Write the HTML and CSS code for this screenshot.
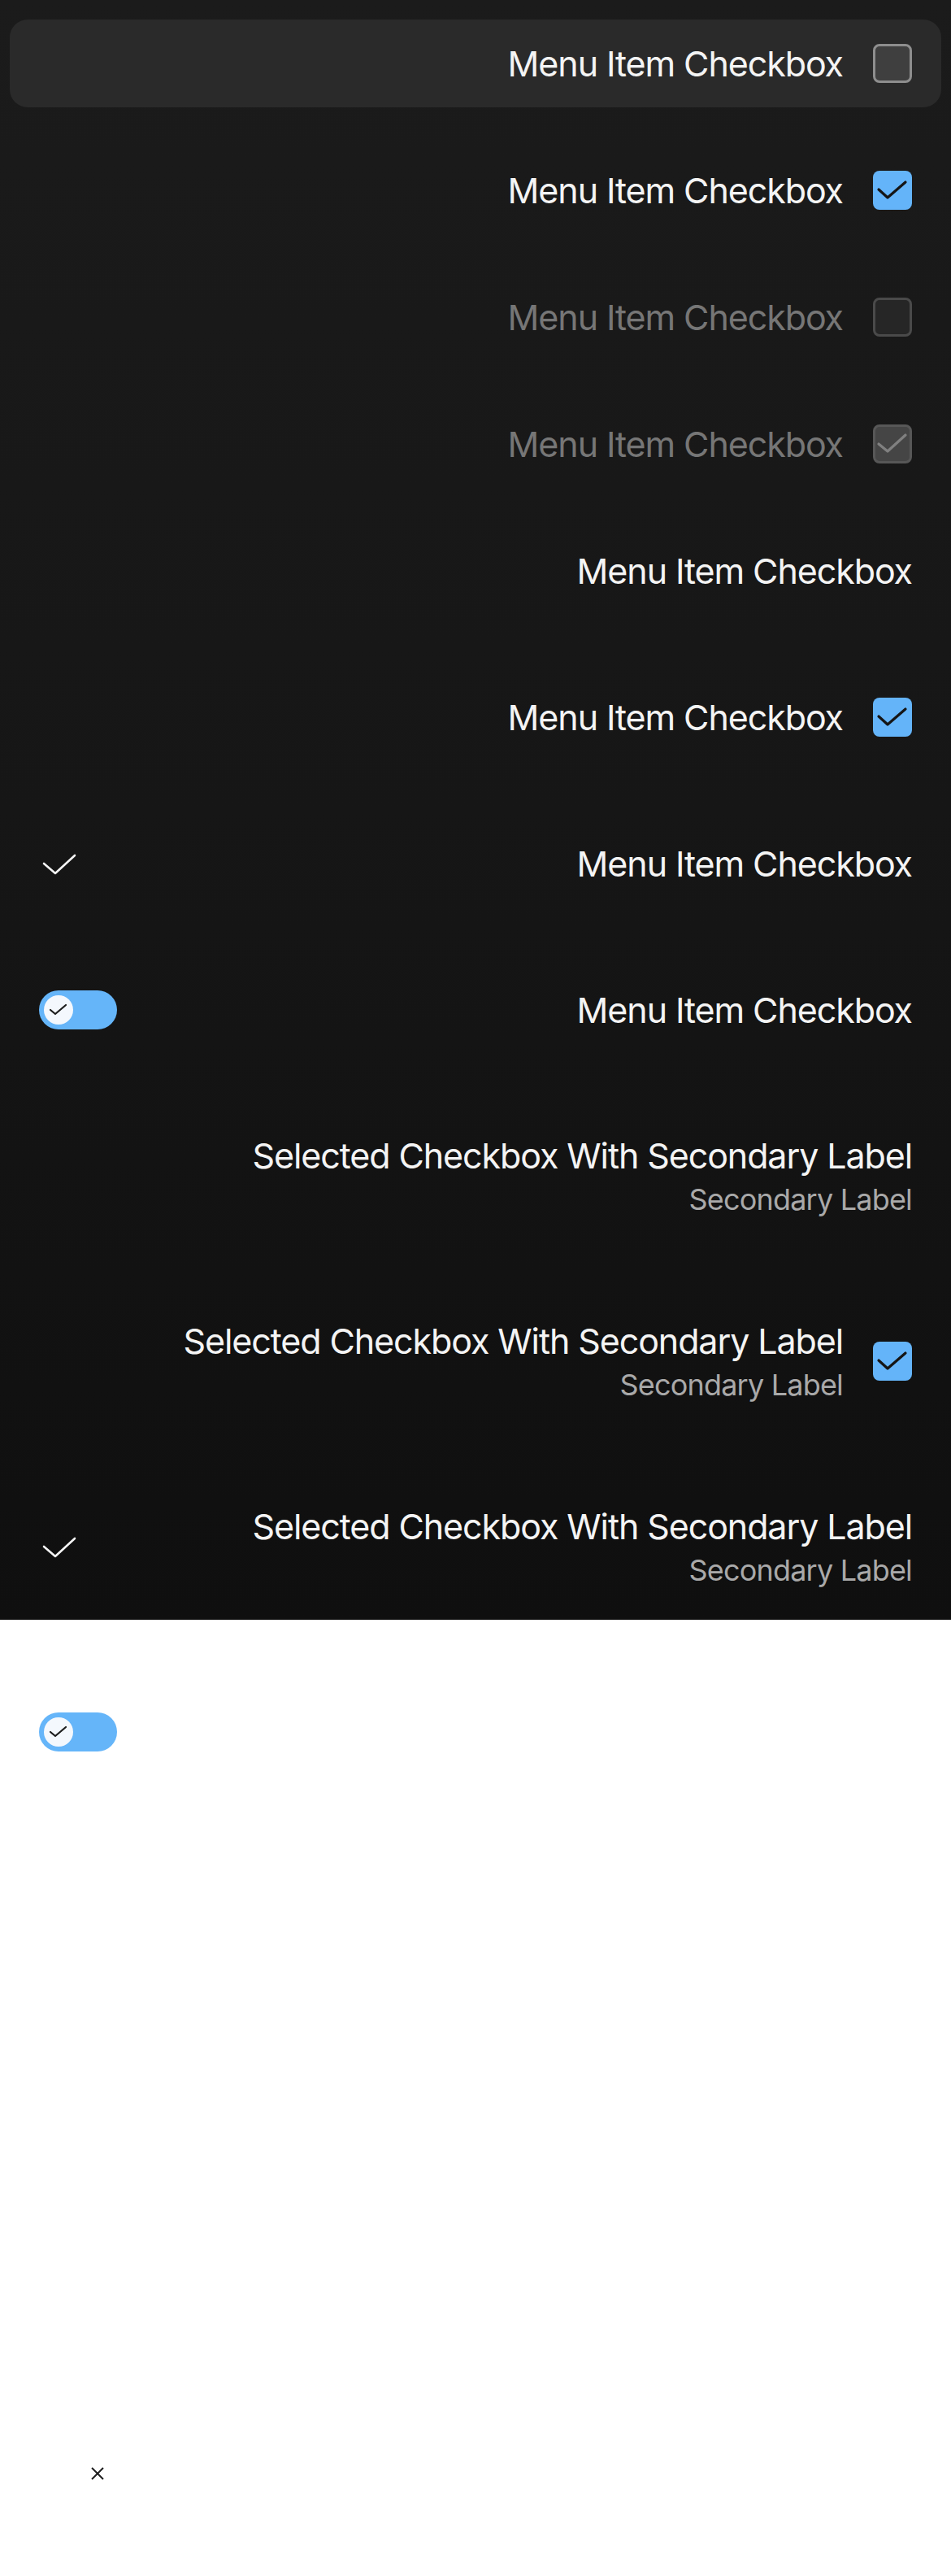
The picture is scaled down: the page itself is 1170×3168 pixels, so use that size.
FILE: index.html
```html
<!DOCTYPE html>
<html lang="en">
<head>
<meta charset="utf-8">
<title>Menu Item Checkbox</title>
<link rel="stylesheet" href="styles.css">
</head>
<body>
<main class="menu">
  <div class="row row--hover">
    <span class="label">Menu Item Checkbox</span>
    <span class="box box--off"></span>
  </div>
  <div class="row">
    <span class="label">Menu Item Checkbox</span>
    <span class="box box--on"><svg viewBox="0 0 48 48"><polyline points="7,23 18,33 40,14"/></svg></span>
  </div>
  <div class="row row--disabled">
    <span class="label">Menu Item Checkbox</span>
    <span class="box box--dis-off"></span>
  </div>
  <div class="row row--disabled">
    <span class="label">Menu Item Checkbox</span>
    <span class="box box--dis-on"><svg viewBox="0 0 48 48"><polyline points="7,24 18,33 40,13"/></svg></span>
  </div>
  <div class="row">
    <span class="label">Menu Item Checkbox</span>
  </div>
  <div class="row row--spaced">
    <span class="label">Menu Item Checkbox</span>
    <span class="box box--on"><svg viewBox="0 0 48 48"><polyline points="7,23 18,33 40,14"/></svg></span>
  </div>
  <div class="row row--spaced row--split">
    <svg class="tick" viewBox="0 0 44 28"><polyline points="4,14 18,26 42,4"/></svg>
    <span class="label">Menu Item Checkbox</span>
  </div>
  <div class="row row--spaced row--split">
    <span class="toggle"><span class="knob"><svg viewBox="0 0 36 36"><polyline points="8,18 14,23 27,12"/></svg></span></span>
    <span class="label">Menu Item Checkbox</span>
  </div>
  <div class="row row--two row--first-two">
    <div class="text">
      <span class="label">Selected Checkbox With Secondary Label</span>
      <span class="sub">Secondary Label</span>
    </div>
  </div>
  <div class="row row--two">
    <div class="text">
      <span class="label">Selected Checkbox With Secondary Label</span>
      <span class="sub">Secondary Label</span>
    </div>
    <span class="box box--on"><svg viewBox="0 0 48 48"><polyline points="7,23 18,33 40,14"/></svg></span>
  </div>
  <div class="row row--two row--split">
    <svg class="tick" viewBox="0 0 44 28"><polyline points="4,14 18,26 42,4"/></svg>
    <div class="text">
      <span class="label">Selected Checkbox With Secondary Label</span>
      <span class="sub">Secondary Label</span>
    </div>
  </div>
</main>
<section class="canvas">
  <span class="toggle"><span class="knob"><svg viewBox="0 0 36 36"><polyline points="8,18 14,23 27,12"/></svg></span></span>
  <svg class="close" viewBox="0 0 16 16"><path d="M1 1 L15 15 M15 1 L1 15"/></svg>
</section>
</body>
</html>
```

FILE: styles.css
```css
* { box-sizing: border-box; }

html, body {
  margin: 0;
  padding: 0;
  background: #ffffff;
}

body {
  font-family: Inter, "Noto Sans", "Liberation Sans", sans-serif;
  height: 3168px;
}

.menu {
  background: linear-gradient(180deg, #1b1b1b 0%, #161616 50%, #0f0f0f 100%);
  padding: 24px 12px 24px;
  display: flex;
  flex-direction: column;
}

.row {
  height: 108px;
  padding: 0 36px;
  display: flex;
  align-items: center;
  justify-content: flex-end;
  gap: 37px;
  border-radius: 22px;
  margin-top: 48px;
}

.row:first-child { margin-top: 0; }

.row--hover { background: #2a2a2a; }

.row--spaced { margin-top: 72px; }

.row--split { justify-content: space-between; }

.row--two { height: 132px; margin-top: 96px; }
.row--first-two { margin-top: 84px; }

.label {
  font-size: 43px;
  line-height: 52px;
  color: #f4f4f4;
  white-space: nowrap;
  letter-spacing: -1.1px;
}

.row--disabled .label { color: #767676; }

.text {
  display: flex;
  flex-direction: column;
  align-items: flex-end;
}

.sub {
  margin-top: 6px;
  font-size: 36px;
  line-height: 44px;
  color: #a9a9a9;
  white-space: nowrap;
  letter-spacing: -0.8px;
}

.box {
  flex: none;
  width: 48px;
  height: 48px;
  border-radius: 8px;
  display: block;
  position: relative;
}

.box svg {
  position: absolute;
  inset: 0;
  width: 48px;
  height: 48px;
  fill: none;
  stroke-width: 3.2;
  stroke-linecap: round;
  stroke-linejoin: round;
}

.box--off {
  background: #3f3f3f;
  border: 3px solid #8e8e8e;
}

.box--on { background: #64b4f9; }
.box--on svg { stroke: #151515; }

.box--dis-off {
  background: #262626;
  border: 3px solid #4a4a4a;
}

.box--dis-on {
  background: #454545;
  border: 3px solid #575757;
}
.box--dis-on svg { stroke: #808080; inset: -3px; }

.tick {
  flex: none;
  width: 44px;
  height: 28px;
  fill: none;
  stroke: #f4f4f4;
  stroke-width: 2.6;
  stroke-linecap: round;
  stroke-linejoin: round;
  margin-left: 2px;
}

.toggle {
  flex: none;
  width: 96px;
  height: 48px;
  border-radius: 24px;
  background: #65b5f9;
  padding: 6px;
  display: flex;
  align-items: center;
}

.knob {
  width: 36px;
  height: 36px;
  border-radius: 50%;
  background: #f4f8fd;
  display: block;
}

.knob svg {
  width: 36px;
  height: 36px;
  display: block;
  fill: none;
  stroke: #1c1c1c;
  stroke-width: 2.2;
  stroke-linecap: round;
  stroke-linejoin: round;
}

.canvas {
  padding: 114px 48px 0;
  display: flex;
  flex-direction: column;
  align-items: flex-start;
}

.close {
  width: 16px;
  height: 16px;
  margin-top: 880px;
  margin-left: 64px;
  fill: none;
  stroke: #1e1e1e;
  stroke-width: 2;
}
```
